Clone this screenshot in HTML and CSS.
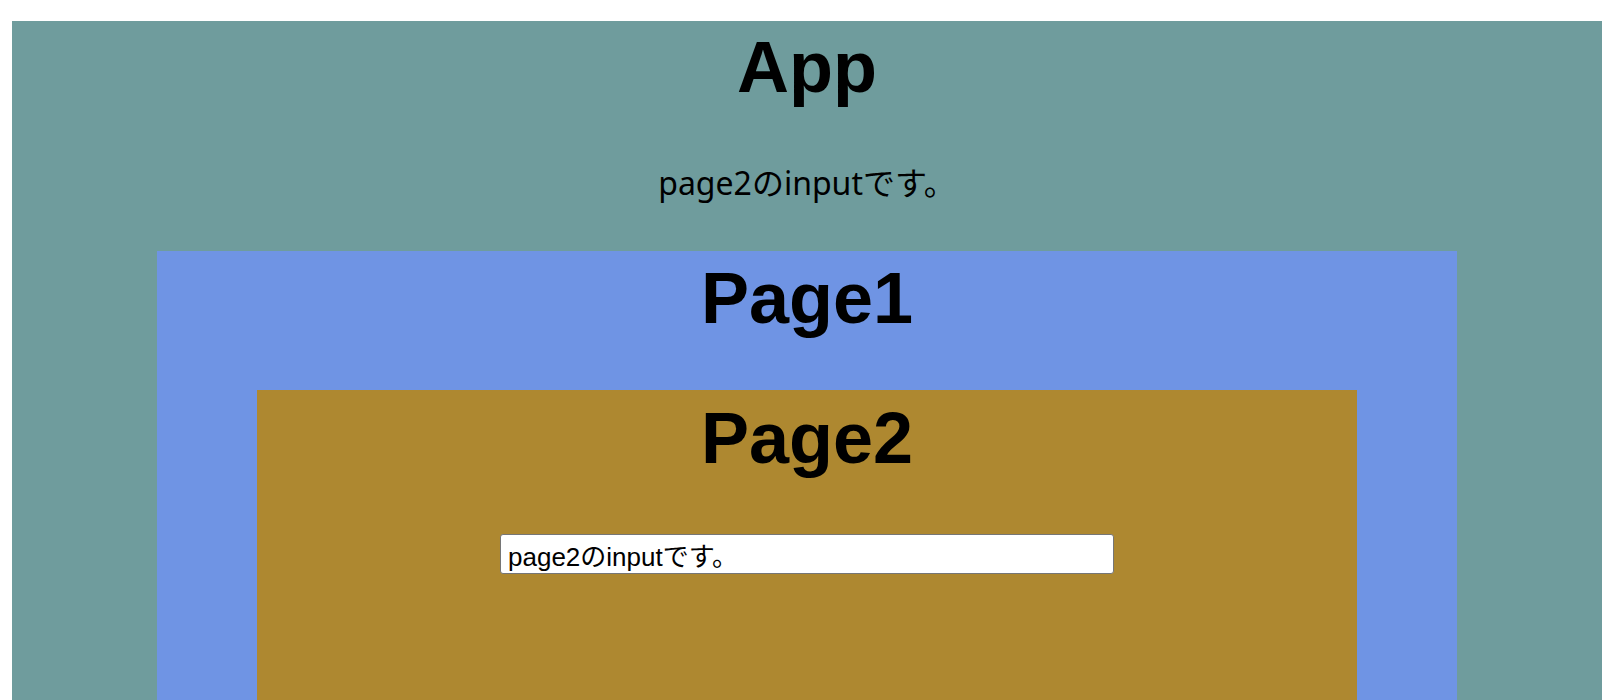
FILE: index.html
```html
<!DOCTYPE html>
<html lang="ja">
<head>
<meta charset="utf-8">
<title>App</title>
<link rel="stylesheet" href="styles.css">
</head>
<body>
<div class="app">
  <h1 class="title">App</h1>
  <p class="echo">page2のinputです。</p>
  <div class="page1">
    <h1 class="title">Page1</h1>
    <div class="page2">
      <h1 class="title">Page2</h1>
      <input class="field" type="text" value="page2のinputです。">
    </div>
  </div>
</div>
</body>
</html>
```

FILE: styles.css
```css
html, body {
  background: #ffffff;
}
body {
  margin: 21px 14px 0 12px;
  font-family: "Noto Sans", "Noto Sans CJK JP", sans-serif;
  color: #000;
  overflow: hidden;
}
.app {
  background: #6f9c9d;
  text-align: center;
  padding-top: 10px;
  display: flex;
  flex-direction: column;
  align-items: center;
}
.title {
  margin: 0;
  font-family: "Liberation Sans", "Noto Sans CJK JP", sans-serif;
  font-weight: bold;
  font-size: 72px;
  line-height: 72px;
}
.echo {
  margin: 56px 0 44px;
  font-size: 32px;
  line-height: 48px;
}
.page1 {
  width: 1300px;
  background: #6f94e4;
  padding-top: 11px;
  display: flex;
  flex-direction: column;
  align-items: center;
}
.page2 {
  width: 1100px;
  margin-top: 56px;
  background: #ae8830;
  padding-top: 12px;
  padding-bottom: 200px;
  display: flex;
  flex-direction: column;
  align-items: center;
}
.field {
  margin-top: 60px;
  box-sizing: border-box;
  width: 614px;
  height: 40px;
  border: 1px solid #767676;
  border-radius: 3px;
  padding: 0 7px;
  background: #fff;
  font-family: "Liberation Sans", "Noto Sans CJK JP", sans-serif;
  font-size: 26px;
  color: #000;
}
```
